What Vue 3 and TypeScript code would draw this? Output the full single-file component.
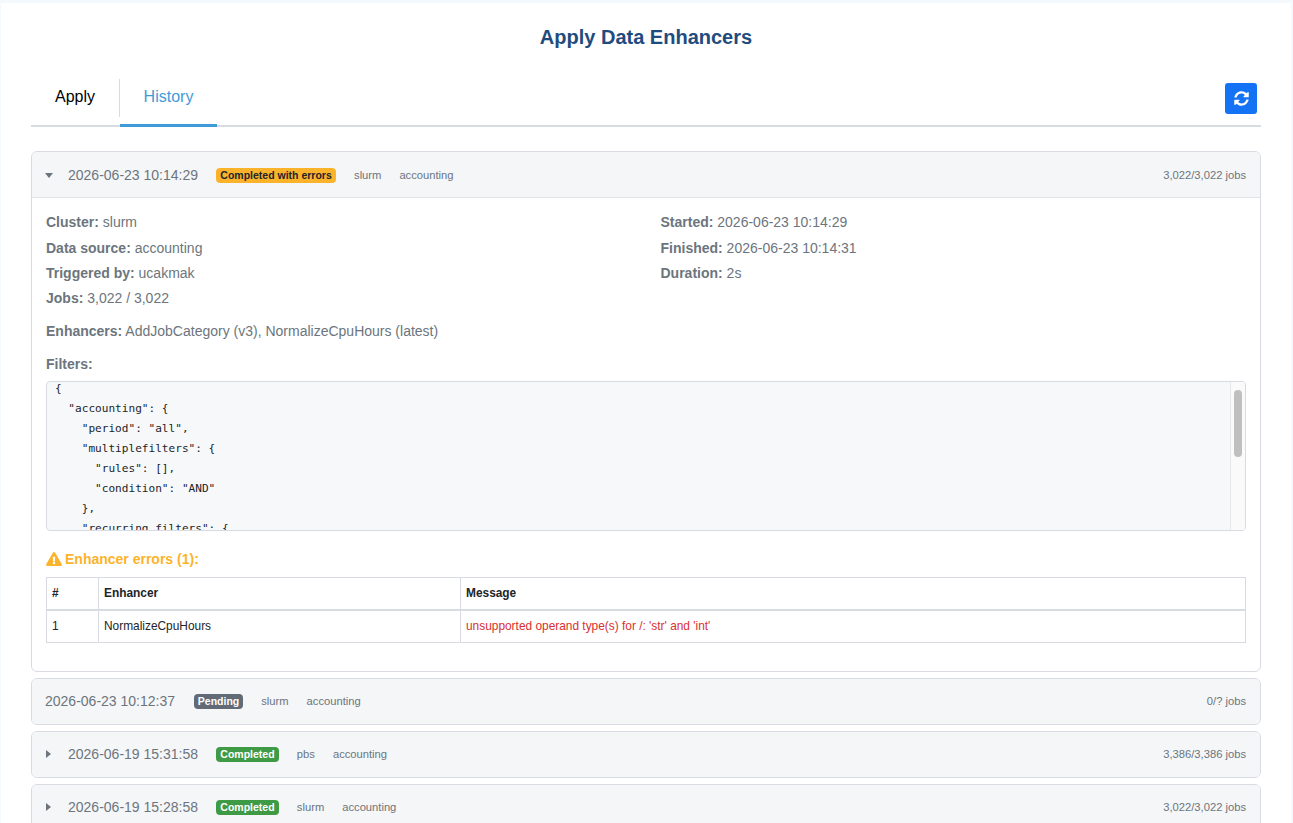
<script setup lang="ts">
const jsonLines = [
  '{',
  '  "accounting": {',
  '    "period": "all",',
  '    "multiplefilters": {',
  '      "rules": [],',
  '      "condition": "AND"',
  '    },',
  '    "recurring_filters": {',
  '      "enabled": false',
  '    }',
  '  }',
  '}'
]

const collapsed = [
  { time: '2026-06-23 10:12:37', status: 'Pending', kind: 'pending', cluster: 'slurm', source: 'accounting', jobs: '0/? jobs', arrow: false },
  { time: '2026-06-19 15:31:58', status: 'Completed', kind: 'done', cluster: 'pbs', source: 'accounting', jobs: '3,386/3,386 jobs', arrow: true },
  { time: '2026-06-19 15:28:58', status: 'Completed', kind: 'done', cluster: 'slurm', source: 'accounting', jobs: '3,022/3,022 jobs', arrow: true }
]
</script>

<template>
  <div class="page">
    <main class="panel">
      <h1 class="title">Apply Data Enhancers</h1>

      <div class="tabs">
        <div class="tab tab-apply">Apply</div>
        <div class="tab tab-history">History</div>
        <button class="refresh" type="button" aria-label="Refresh">
          <svg viewBox="0 0 512 512" width="15" height="15">
            <path fill="#fff" d="M370.72 133.28C339.458 104.008 298.888 87.962 255.848 88c-77.458.068-144.328 53.178-162.791 126.85-1.344 5.363-6.122 9.15-11.651 9.15H24.103c-7.498 0-13.194-6.807-11.807-14.176C33.933 94.924 134.813 8 256 8c66.448 0 126.791 26.136 171.315 68.685L463.03 40.97C478.149 25.851 504 36.559 504 57.941V192c0 13.255-10.745 24-24 24H345.941c-21.382 0-32.09-25.851-16.971-40.971l41.75-41.749zM32 296h134.059c21.382 0 32.09 25.851 16.971 40.971l-41.75 41.75c31.262 29.273 71.835 45.319 114.876 45.28 77.418-.07 144.315-53.144 162.787-126.849 1.344-5.363 6.122-9.15 11.651-9.15h57.304c7.498 0 13.194 6.807 11.807 14.176C478.067 417.076 377.187 504 256 504c-66.448 0-126.791-26.136-171.315-68.685L48.97 471.03C33.851 486.149 8 475.441 8 454.059V320c0-13.255 10.745-24 24-24z" />
          </svg>
        </button>
      </div>

      <section class="card">
        <header class="card-head">
          <span class="caret caret-down"></span>
          <span class="time">2026-06-23 10:14:29</span>
          <span class="badge badge-warn">Completed with errors</span>
          <span class="meta">slurm</span>
          <span class="meta">accounting</span>
          <span class="jobs">3,022/3,022 jobs</span>
        </header>

        <div class="card-body">
          <div class="facts">
            <div class="fact-col">
              <div><b>Cluster:</b> slurm</div>
              <div><b>Data source:</b> accounting</div>
              <div><b>Triggered by:</b> ucakmak</div>
              <div><b>Jobs:</b> 3,022 / 3,022</div>
            </div>
            <div class="fact-col">
              <div><b>Started:</b> 2026-06-23 10:14:29</div>
              <div><b>Finished:</b> 2026-06-23 10:14:31</div>
              <div><b>Duration:</b> 2s</div>
            </div>
          </div>

          <div class="enhancers"><b>Enhancers:</b> AddJobCategory (v3), NormalizeCpuHours (latest)</div>
          <div class="filters-label"><b>Filters:</b></div>

          <div class="code-box">
            <pre class="code">{{ jsonLines.join('\n') }}</pre>
            <div class="scroll-track"><div class="scroll-thumb"></div></div>
          </div>

          <div class="errors-title">
            <svg viewBox="0 0 576 512" width="16" height="14">
              <path fill="#fbb32b" d="M569.517 440.013C587.975 472.007 564.806 512 527.94 512H48.054c-36.937 0-59.999-40.055-41.577-71.987L246.423 24.035c18.467-32.009 64.72-31.951 83.154 0l239.94 416.978zM288 354c-25.405 0-46 20.595-46 46s20.595 46 46 46 46-20.595 46-46-20.595-46-46-46zm-43.673-165.346l7.418 136c.347 6.364 5.609 11.346 11.982 11.346h48.546c6.373 0 11.635-4.982 11.982-11.346l7.418-136c.375-6.874-5.098-12.654-11.982-12.654h-63.383c-6.884 0-12.356 5.78-11.981 12.654z" />
            </svg>
            <span>Enhancer errors (1):</span>
          </div>

          <table class="errors">
            <colgroup>
              <col class="col-num" />
              <col class="col-name" />
              <col />
            </colgroup>
            <thead>
              <tr>
                <th>#</th>
                <th>Enhancer</th>
                <th>Message</th>
              </tr>
            </thead>
            <tbody>
              <tr>
                <td>1</td>
                <td>NormalizeCpuHours</td>
                <td class="err-msg">unsupported operand type(s) for /: 'str' and 'int'</td>
              </tr>
            </tbody>
          </table>
        </div>
      </section>

      <section v-for="row in collapsed" :key="row.time" class="card card-closed">
        <header class="card-head">
          <span v-if="row.arrow" class="caret caret-right"></span>
          <span class="time">{{ row.time }}</span>
          <span class="badge" :class="row.kind === 'done' ? 'badge-done' : 'badge-pending'">{{ row.status }}</span>
          <span class="meta">{{ row.cluster }}</span>
          <span class="meta">{{ row.source }}</span>
          <span class="jobs">{{ row.jobs }}</span>
        </header>
      </section>
    </main>
  </div>
</template>

<style>
html,
body {
  margin: 0;
  height: 100%;
  overflow: hidden;
  background: #f4f9fe;
}
</style>

<style scoped>
.page {
  height: 823px;
  overflow: hidden;
  padding: 3px 2px 0 1px;
  box-sizing: border-box;
  font-family: "Liberation Sans", Arial, sans-serif;
  color: #6c757d;
  font-size: 14px;
}
.panel {
  background: #fff;
  padding: 0 30px;
  min-height: 900px;
}
.title {
  margin: 0;
  padding-top: 22px;
  line-height: 24px;
  font-size: 20px;
  font-weight: 700;
  text-align: center;
  color: #1f4c7e;
}
.tabs {
  display: flex;
  align-items: flex-start;
  height: 46px;
  margin-top: 30px;
  border-bottom: 2px solid #d8dce2;
}
.tab {
  font-size: 16px;
  line-height: 36px;
  box-sizing: border-box;
  text-align: center;
}
.tab-apply {
  width: 89px;
  height: 38px;
  color: #000;
  border-right: 1px solid #d8dce2;
}
.tab-history {
  width: 97px;
  height: 48px;
  color: #3f9bd8;
  border-bottom: 3px solid #3f9bd8;
}
.refresh {
  margin-left: auto;
  margin-right: 4px;
  margin-top: 4px;
  width: 32px;
  height: 31px;
  padding: 0;
  border: 0;
  border-radius: 3px;
  background: #1473f5;
  display: flex;
  align-items: center;
  justify-content: center;
}
.card {
  border: 1px solid #d8dce2;
  border-radius: 6px;
  margin-top: 6px;
  overflow: hidden;
}
.tabs + .card {
  margin-top: 24px;
}
.card-head {
  display: flex;
  align-items: center;
  height: 46px;
  padding: 1px 14px 0 13px;
  background: #f5f6f8;
  border-bottom: 1px solid #e1e4e8;
  box-sizing: border-box;
}
.card-closed .card-head {
  height: 45px;
  padding-top: 0;
  border-bottom: 0;
}
.caret {
  width: 0;
  height: 0;
  flex: none;
}
.caret-down {
  border-left: 4.5px solid transparent;
  border-right: 4.5px solid transparent;
  border-top: 5px solid #6c757d;
  margin-right: 15px;
}
.caret-right {
  border-top: 4px solid transparent;
  border-bottom: 4px solid transparent;
  border-left: 5px solid #6c757d;
  margin-left: 1px;
  margin-right: 17px;
}
.time {
  font-size: 14px;
  color: #6c757d;
  margin-right: 18px;
}
.badge {
  font-size: 10.5px;
  font-weight: 700;
  line-height: 15px;
  height: 15px;
  padding: 0 4.3px;
  border-radius: 4px;
  margin-right: 18px;
}
.badge-warn {
  background: #fbb32b;
  color: #212529;
}
.badge-done {
  background: #3f9a46;
  color: #fff;
}
.badge-pending {
  background: #626b75;
  color: #fff;
  padding: 0 4px;
  margin-left: 0.8px;
}
.meta {
  font-size: 11.2px;
  color: #6c757d;
  margin-right: 18px;
}
.jobs {
  font-size: 11.2px;
  color: #6c757d;
  margin-left: auto;
}
.card-body {
  padding: 12.4px 14px 28px;
  color: #6c757d;
  line-height: 25.2px;
}
.facts {
  display: grid;
  grid-template-columns: 614.5px 1fr;
}
.enhancers {
  margin-top: 8px;
}
.filters-label {
  margin-top: 7.5px;
  margin-bottom: 3.5px;
}
.code-box {
  position: relative;
  height: 150px;
  box-sizing: border-box;
  border: 1px solid #d8dce2;
  border-radius: 4px;
  background: #f7f8fa;
  overflow: hidden;
}
.code {
  margin: -3px 0 0;
  padding: 0 8px;
  font-family: "DejaVu Sans Mono", "Liberation Mono", monospace;
  font-size: 11.1px;
  line-height: 20px;
  color: #212529;
}
.scroll-track {
  position: absolute;
  top: 0;
  right: 0;
  bottom: 0;
  width: 14px;
  background: #fafafa;
  border-left: 1px solid #e8e8e8;
}
.scroll-thumb {
  position: absolute;
  top: 8px;
  left: 3px;
  width: 8px;
  height: 67px;
  border-radius: 4px;
  background: #bfbfbf;
}
.errors-title {
  display: flex;
  align-items: center;
  gap: 3px;
  margin-top: 16px;
  color: #fbb32b;
  font-weight: 700;
  line-height: 25px;
}
.errors {
  width: 100%;
  margin-top: 5px;
  border-collapse: collapse;
  table-layout: fixed;
  font-size: 11.9px;
  color: #212529;
}
.col-num {
  width: 52px;
}
.col-name {
  width: 362px;
}
.errors th,
.errors td {
  border: 1px solid #d8dce2;
  padding: 0 5px 1px;
  text-align: left;
  height: 30px;
  line-height: 16px;
}
.errors th {
  border-bottom-width: 2px;
  font-weight: 700;
}
.err-msg {
  color: #d9302f;
}
</style>
